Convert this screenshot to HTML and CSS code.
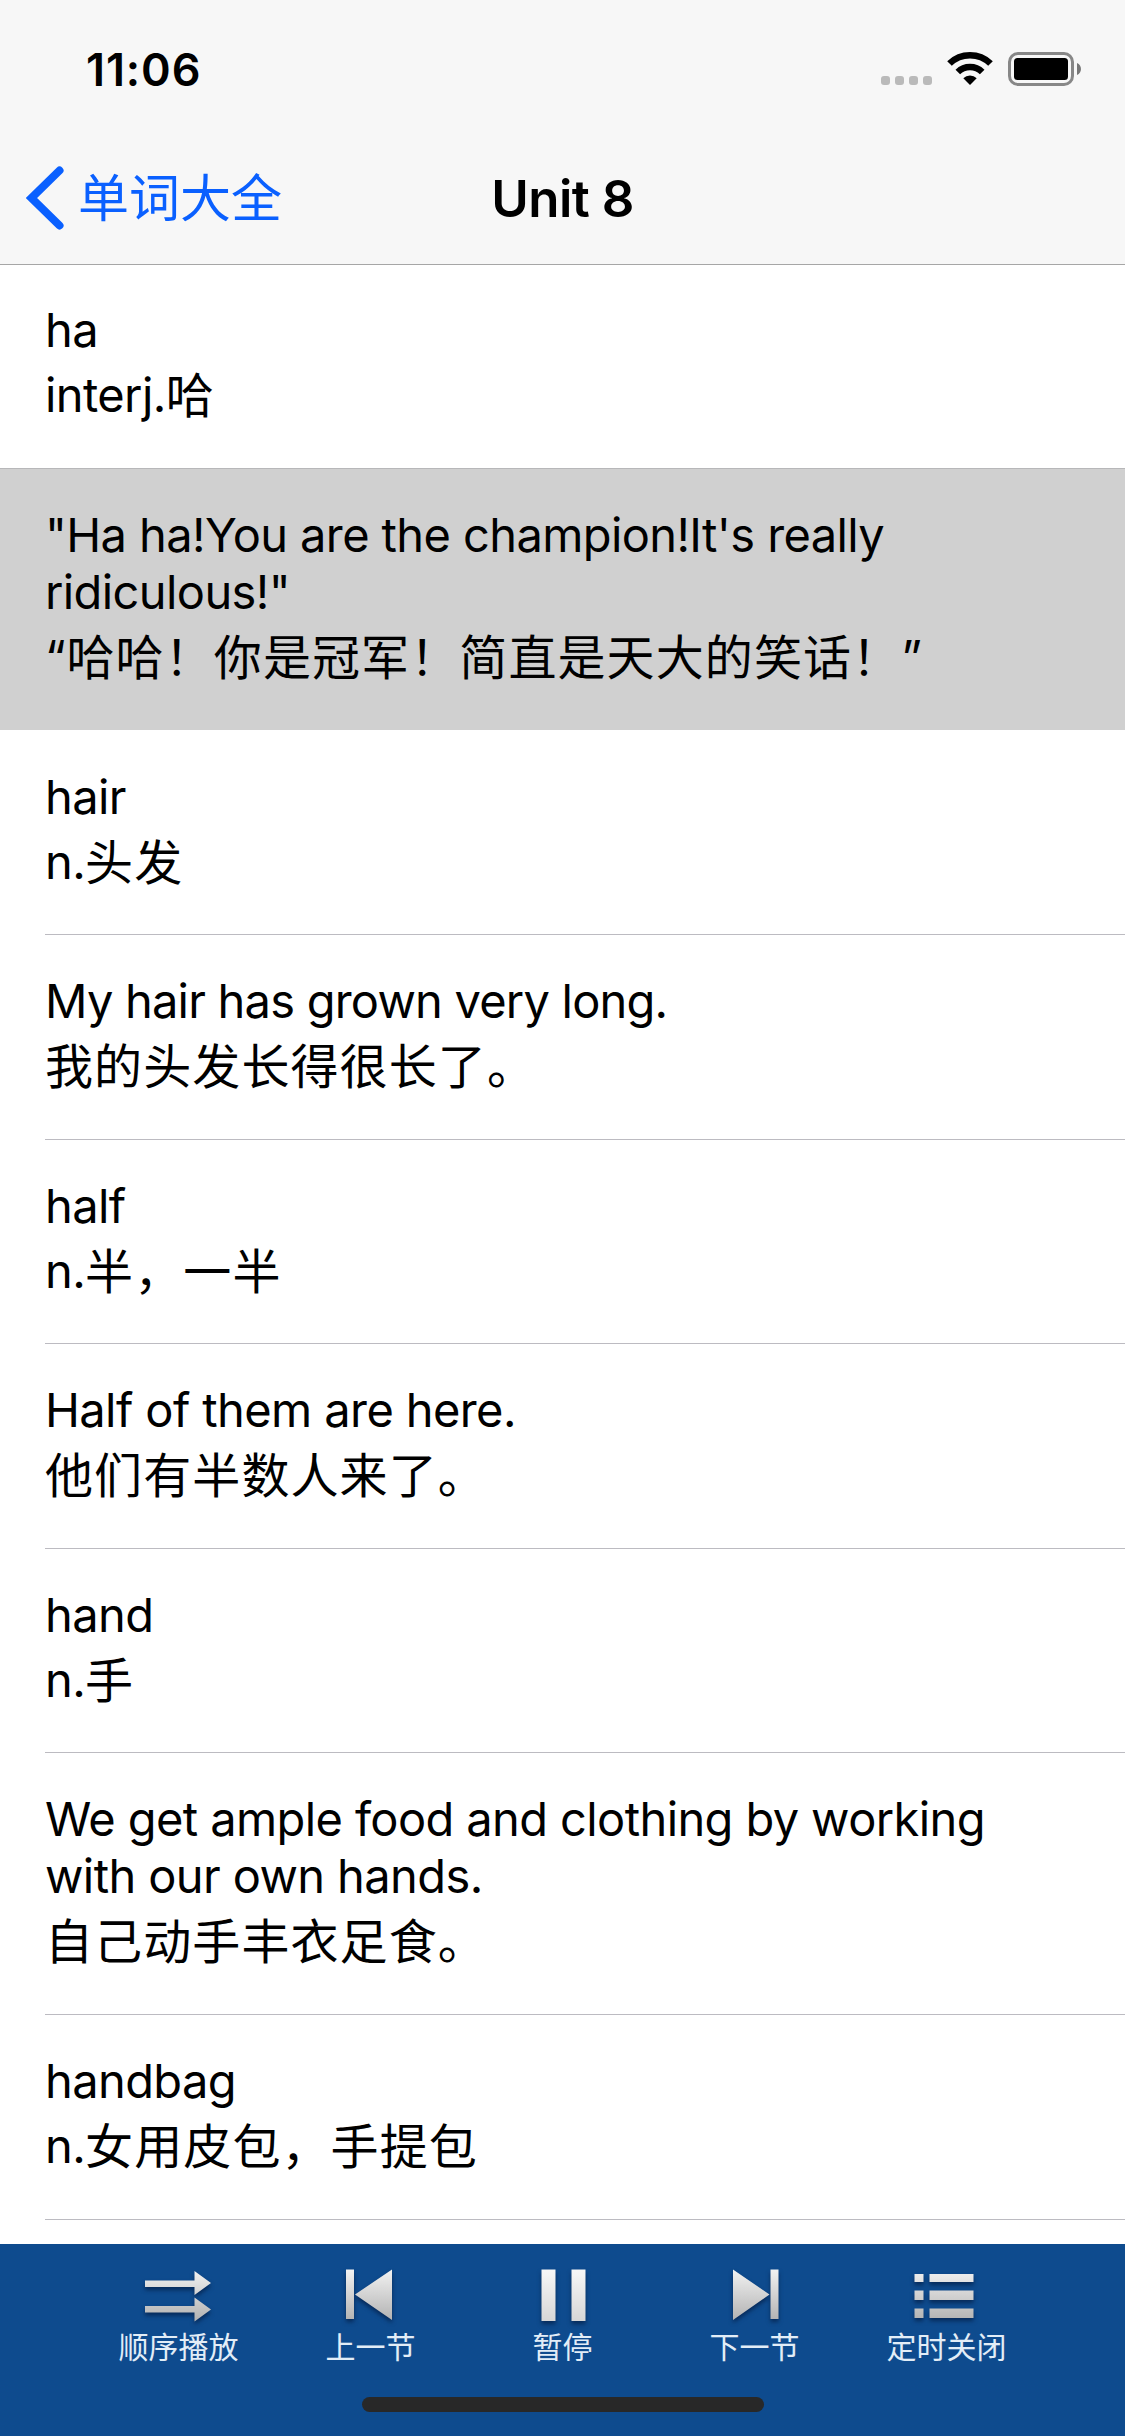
FILE: index.html
```html
<!DOCTYPE html>
<html lang="zh-CN">
<head>
<meta charset="utf-8">
<title>Unit 8</title>
<link rel="stylesheet" href="styles.css">
</head>
<body>
<div class="screen">
  <header class="header">
    <div class="status">
      <span class="time">11:06</span>
      <svg class="status-icons" width="206" height="40" viewBox="0 0 206 40">
        <g fill="#bababa">
          <rect x="1" y="28" width="9" height="9" rx="3"/>
          <rect x="15" y="28" width="9" height="9" rx="3"/>
          <rect x="29" y="28" width="9" height="9" rx="3"/>
          <rect x="43" y="28" width="9" height="9" rx="3"/>
        </g>
        <g fill="none" stroke="#000" stroke-width="6.6">
          <path d="M69.5 15.500A29.5 29.5 0 0 1 110.500 15.500"/>
          <path d="M77.8 24A17.500 17.500 0 0 1 102.200 24"/>
        </g>
        <path d="M90 37L83.300 30.300A9.500 9.500 0 0 1 96.700 30.300Z"/>
        <rect x="129.500" y="5.500" width="63" height="31" rx="8.500" fill="none" stroke="#878787" stroke-width="3"/>
        <rect x="134" y="10" width="54" height="22" rx="3.500"/>
        <path d="M197 15C202.300 17 202.300 25 197 27Z" fill="#777"/>
      </svg>
    </div>
    <nav class="nav">
      <a class="back">
        <svg class="chevron" width="38" height="64" viewBox="0 0 38 64"><path d="M33.500 4.500L5.500 32L33.500 59.500" fill="none" stroke="#0a60ff" stroke-width="8" stroke-linecap="round" stroke-linejoin="miter"/></svg>
        <span class="back-label">单词大全</span>
      </a>
      <h1 class="title">Unit 8</h1>
    </nav>
  </header>
  <main class="list">
    <section class="row full"><p class="en">ha</p><p class="zh">interj.<span class="cjk">哈</span></p></section>
    <section class="row selected"><p class="en">"Ha ha!You are the champion!It's really<br>ridiculous!"</p><p class="zh"><span class="quote">“</span><span class="cjk">哈哈！你是冠军！简直是天大的笑话！</span><span class="quote">”</span></p></section>
    <section class="row"><p class="en">hair</p><p class="zh">n.<span class="cjk">头发</span></p></section>
    <section class="row"><p class="en tight">My hair has grown very long.</p><p class="zh"><span class="cjk">我的头发长得很长了。</span></p></section>
    <section class="row"><p class="en">half</p><p class="zh">n.<span class="cjk">半，一半</span></p></section>
    <section class="row"><p class="en">Half of them are here.</p><p class="zh"><span class="cjk">他们有半数人来了。</span></p></section>
    <section class="row"><p class="en">hand</p><p class="zh">n.<span class="cjk">手</span></p></section>
    <section class="row"><p class="en">We get ample food and clothing by working<br>with our own hands.</p><p class="zh"><span class="cjk">自己动手丰衣足食。</span></p></section>
    <section class="row last"><p class="en">handbag</p><p class="zh">n.<span class="cjk">女用皮包，手提包</span></p></section>
  </main>
  <footer class="player">
    <svg class="defs" width="0" height="0">
      <linearGradient id="metal" gradientUnits="userSpaceOnUse" x1="0" y1="4" x2="0" y2="54"><stop offset="0" stop-color="#f3f3f3"/><stop offset="1" stop-color="#b4b4b4"/></linearGradient>
      <linearGradient id="bright" gradientUnits="userSpaceOnUse" x1="0" y1="4" x2="0" y2="56"><stop offset="0" stop-color="#f8f8f8"/><stop offset="1" stop-color="#d6d6d6"/></linearGradient>
    </svg>
    <div class="controls">
      <div class="control"><svg class="icon" width="80" height="60" viewBox="1 0 80 60"><path fill="url(#metal)" d="M7 15.500H56.500V6L73 18L56.500 30V22H7ZM7 41H56.500V32.500L73 44.500L56.500 56.500V47.500H7Z"/></svg><span>顺序播放</span></div>
      <div class="control"><svg class="icon" width="80" height="60" viewBox="1 0 80 60"><path fill="url(#metal)" d="M16 4.500H24V54H16ZM62 4.500V55L25 29.500Z"/></svg><span>上一节</span></div>
      <div class="control"><svg class="icon" width="80" height="60" viewBox="0.5 0 80 60"><path fill="url(#bright)" d="M19 4.500H33V56H19ZM49 4.500H63V56H49Z"/></svg><span>暂停</span></div>
      <div class="control"><svg class="icon" width="80" height="60" viewBox="1 0 80 60"><path fill="url(#metal)" d="M56.500 4.500H64.500V54H56.500ZM19 4.500V55L55.500 29.500Z"/></svg><span>下一节</span></div>
      <div class="control"><svg class="icon" width="80" height="60" viewBox="0.5 0 80 60"><path fill="url(#metal)" d="M8 9H17V17H8ZM23 9H67V17H23ZM8 25.500H17V35H8ZM23 25.500H67V35H23ZM8 43.500H17V53H8ZM23 43.500H67V53H23Z"/></svg><span>定时关闭</span></div>
    </div>
    <div class="home"></div>
  </footer>
</div>
</body>
</html>
```
FILE: styles.css
```css
* { box-sizing: border-box; }
body { margin: 0; background: #fff; color: #000; font-family: Inter, "Noto Sans CJK SC", sans-serif; }
p, h1 { margin: 0; }
.screen { width: 1125px; height: 2436px; display: flex; flex-direction: column; overflow: hidden; }
.header { flex: none; height: 265px; background: #f7f7f7; border-bottom: 1px solid #a6a6a6; }
.status { height: 132px; display: flex; justify-content: space-between; padding: 48px 39px 0 86px; }
.time { font-size: 45px; font-weight: 600; line-height: 43px; letter-spacing: 0.9px; }
.nav { height: 132px; display: grid; grid-template-columns: 1fr auto 1fr; align-items: center; }
.back { display: flex; align-items: center; padding-left: 26px; color: #0a60ff; }
.chevron { flex: none; }
.back-label { font-size: 51px; line-height: 64px; margin: -6px 0 0 14px; font-family: "Noto Sans CJK SC", sans-serif; font-weight: 400; }
.title { font-size: 51px; font-weight: 600; line-height: 64px; letter-spacing: -0.5px; padding-top: 1px; }
.list { flex: 1; min-height: 0; overflow: hidden; }
.row { padding: 37px 0 35px; margin-left: 45px; border-bottom: 1px solid #bcbbc1; font-size: 47px; letter-spacing: -0.6px; }
.row:nth-child(even), .row.last { padding-bottom: 36px; }
.row.full { margin-left: 0; padding: 36px 0 36px 45px; border-bottom-color: #b7b7b9; }
.row.selected { margin-left: 0; padding-left: 45px; background: #d0d0d0; border-bottom-color: #fff; }
.en { line-height: 57px; white-space: nowrap; }
.en.tight { letter-spacing: -0.78px; }
.zh { line-height: 74px; white-space: nowrap; }
.cjk { font-family: "Noto Sans CJK SC", sans-serif; font-size: 48px; line-height: 1; letter-spacing: 1.1px; font-weight: 400; position: relative; top: 1px; }
.quote { letter-spacing: 0.8px; }
.player { flex: none; height: 192px; background: #0e4b8e; display: flex; flex-direction: column; align-items: center; }
.defs { position: absolute; }
.controls { display: grid; grid-template-columns: repeat(5, 192px); padding-top: 21px; }
.control { display: flex; flex-direction: column; align-items: center; color: #e2edf7; font: 400 30px/40px "Noto Sans CJK SC", sans-serif; }
.icon { filter: drop-shadow(0 3px 2px rgba(0, 15, 45, .55)); }
.home { width: 402px; height: 15px; border-radius: 8px; background: #282828; margin-top: 32px; }
```
